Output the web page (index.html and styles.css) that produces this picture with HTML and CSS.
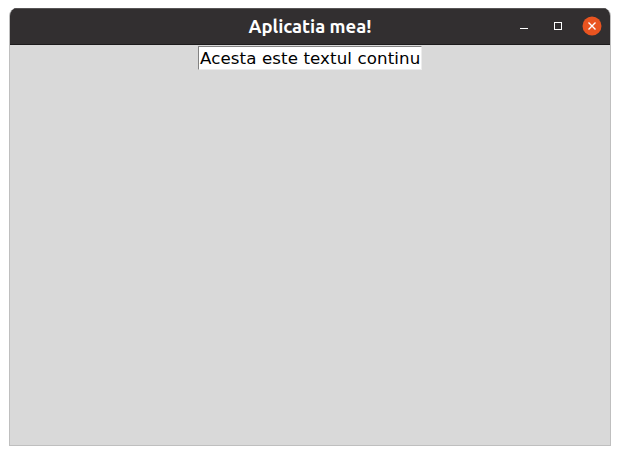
FILE: index.html
```html
<!DOCTYPE html>
<html lang="ro">
<head>
<meta charset="utf-8">
<title>Aplicatia mea!</title>
<link rel="stylesheet" href="styles.css">
</head>
<body>
<main class="window">
  <header class="titlebar">
    <h1 class="title">Aplicatia mea!</h1>
    <div class="controls">
      <svg class="control" viewBox="0 0 20 20"><path d="M6 12.5h8" stroke="#fff"/></svg>
      <svg class="control" viewBox="0 0 20 20"><rect x="6.5" y="6.5" width="7" height="7" fill="none" stroke="#fff"/></svg>
      <svg class="control" viewBox="0 0 20 20"><circle cx="10" cy="10" r="9.5" fill="#e95420"/><path d="M6.5 6.5l7 7m0-7l-7 7" stroke="#fff" stroke-width="1.4"/></svg>
    </div>
  </header>
  <section class="content">
    <div class="entry">Acesta este textul continu</div>
  </section>
</main>
</body>
</html>
```

FILE: styles.css
```css
* { box-sizing: border-box; }
body { margin: 0; background: #fff; padding: 8px 9px 9px; height: 455px; }
.window {
  height: 438px;
  border: 1px solid #bfbfbf;
  border-top: 0;
  border-radius: 8px 8px 0 0;
  background: #d9d9d9;
  overflow: hidden;
  display: flex;
  flex-direction: column;
}
.titlebar {
  height: 37px;
  flex: none;
  background: #322f30;
  border-bottom: 1px solid #1c1a1b;
  box-shadow: inset 0 1px #575556;
  display: grid;
  grid-template-columns: 1fr auto 1fr;
  align-items: center;
}
.title {
  grid-column: 2;
  margin: 0;
  color: #fff;
  font: 700 18.5px/36px "Ubuntu", "Noto Sans", sans-serif;
  white-space: nowrap;
}
.controls { display: flex; justify-content: flex-end; gap: 14px; padding-right: 8px; }
.control { width: 20px; height: 20px; display: block; }
.content { flex: 1; display: flex; justify-content: center; align-items: flex-start; padding-top: 1px; }
.entry {
  width: 224px;
  height: 24px;
  background: #fff;
  border: 1px solid;
  border-color: #828282 #ececec #ececec #828282;
  padding-left: 1px;
  overflow: hidden;
  white-space: nowrap;
  color: #000;
  font: 16.67px/23px "DejaVu Sans", sans-serif;
  letter-spacing: 0.1px;
}
```
